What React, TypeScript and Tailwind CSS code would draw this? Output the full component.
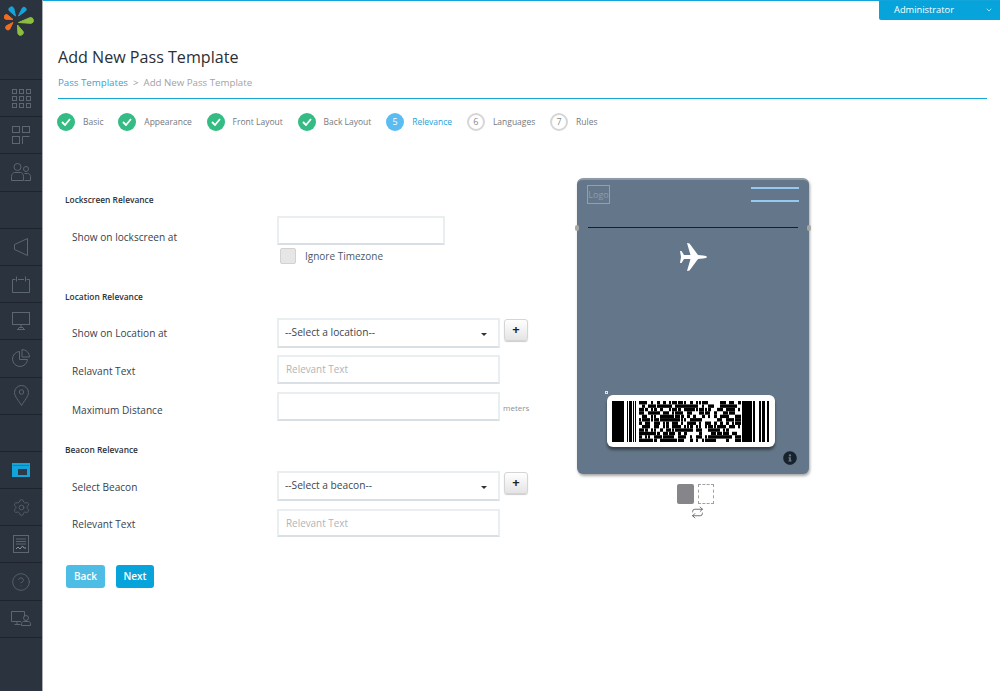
import { ChevronDown, CircleHelp, Repeat, Settings } from 'lucide-react'
import { FaInfoCircle } from 'react-icons/fa'
import type { ReactNode } from 'react'

const stroke = { fill: 'none', stroke: '#5c6772', strokeWidth: 1 }

function Svg({ w = 20, h = 20, children }: { w?: number; h?: number; children: ReactNode }) {
  return (
    <svg width={w} height={h} viewBox={`0 0 ${w} ${h}`} {...stroke}>
      {children}
    </svg>
  )
}

const navIcons: Record<string, ReactNode> = {
  grid: (
    <Svg w={19} h={19}>
      {[0, 7, 14].flatMap((y) =>
        [0, 7, 14].map((x) => <rect key={`${x}-${y}`} x={x + 0.5} y={y + 0.5} width={4} height={4} />),
      )}
    </Svg>
  ),
  dash: (
    <Svg w={18} h={18}>
      <rect x={0.5} y={0.5} width={7} height={6} />
      <rect x={10.5} y={0.5} width={7} height={6} />
      <rect x={0.5} y={10.5} width={7} height={7} />
      <path d="M10.5 18v-7.5h7" />
    </Svg>
  ),
  users: (
    <Svg w={20} h={18}>
      <circle cx={6.5} cy={4} r={3.5} />
      <circle cx={15} cy={6} r={2.5} />
      <path d="M.5 17.5v-4c0-2.5 2-4 3-4h6c1.5 0 3 1.5 3 4v4z" />
      <path d="M13.5 10.5h3c2 0 3 1.5 3 3v4h-6" />
    </Svg>
  ),
  speaker: (
    <Svg w={14} h={18}>
      <path d="M13.5.5v17L.5 11.5v-5z" />
    </Svg>
  ),
  calendar: (
    <Svg w={18} h={17}>
      <path d="M.5 3.5v13h17v-13h-3M3.5 3.5h-3M6 3.5h6" />
      <path d="M4.5.5v5M13.5.5v5" />
    </Svg>
  ),
  monitor: (
    <Svg w={18} h={18}>
      <rect x={0.5} y={0.5} width={17} height={12} />
      <path d="M9 13v2M5 17.5h8M7 15.5h4l1 2H6z" />
    </Svg>
  ),
  pie: (
    <Svg w={18} h={18}>
      <path d="M7.5 2.5a7.5 7.5 0 1 0 8 8h-8z" />
      <path d="M10 .5a7.5 7.5 0 0 1 7.5 7.5H10z" />
    </Svg>
  ),
  pin: (
    <Svg w={15} h={21}>
      <path d="M7.5 20.5C5 16 .5 11.5.5 7.5a7 7 0 0 1 14 0c0 4-4.5 8.5-7 13z" />
      <circle cx={7.5} cy={7} r={2.2} />
    </Svg>
  ),
  window: (
    <svg width={18} height={14} viewBox="0 0 18 14">
      <rect width={18} height={14} fill="#12a5dc" />
      <rect x={1} y={2} width={16} height={1} fill="#1a7da6" />
      <rect x={6} y={6} width={9} height={6} fill="#2c3a4a" />
    </svg>
  ),
  gear: <Settings size={19} strokeWidth={1} color="#5c6772" />,
  report: (
    <Svg w={16} h={18}>
      <rect x={0.5} y={0.5} width={15} height={17} />
      <path d="M3 4h10M3 6.5h10M3 9h10" />
      <path d="M3 14l2-2 2 2 2.5-3 1.5 2h2" stroke="#8a939c" />
    </Svg>
  ),
  help: <CircleHelp size={20} strokeWidth={1} color="#5c6772" />,
  support: (
    <Svg w={20} h={15}>
      <path d="M10 10.5H.5V.5h13v5" />
      <path d="M6 10.5V13M3.5 13.5h6" />
      <circle cx={15} cy={7} r={2.5} />
      <path d="M10.5 14.5v-2c0-1 1-2 2-2h5c1 0 2 1 2 2v2z" />
    </Svg>
  ),
}

const navRows = [
  'grid', 'dash', 'users', '', 'speaker', 'calendar', 'monitor', 'pie', 'pin', '', 'window', 'gear', 'report', 'help', 'support',
]

// petal = a teardrop, thin at the hub and round at the outer end
const petals: [number, number, number, number, number, string][] = [
  [15.5, 16, 11.5, 9.5, 2.6, '#12a5dc'],
  [18.5, 16, 24, 9.5, 2.2, '#12a5dc'],
  [13, 19.5, 6.5, 17, 2.4, '#f26b21'],
  [13, 22.5, 8, 27.5, 2.4, '#f26b21'],
  [18.5, 22.5, 30.5, 20.5, 2.9, '#8dbf3f'],
  [17.5, 25, 20.5, 32.5, 2.8, '#8dbf3f'],
]

function petalPath(ix: number, iy: number, ox: number, oy: number, r: number) {
  const len = Math.hypot(ox - ix, oy - iy)
  const nx = (-(oy - iy) / len) * r
  const ny = ((ox - ix) / len) * r
  return `M${ix} ${iy}L${ox + nx} ${oy + ny}A${r} ${r} 0 0 0 ${ox - nx} ${oy - ny}Z`
}

function Logo() {
  return (
    <svg width={30} height={30} viewBox="4 6 30 30">
      {petals.map(([ix, iy, ox, oy, r, color]) => (
        <path
          key={`${ix}-${iy}`}
          d={petalPath(ix, iy, ox, oy, r)}
          fill={color}
          stroke={color}
          strokeWidth={1}
          strokeLinejoin="round"
        />
      ))}
    </svg>
  )
}

function Sidebar() {
  return (
    <aside className="flex w-[43px] flex-none flex-col border-r border-[#a9aeb3] bg-[#2a333e]">
      <div className="h-[79px] pt-[6px] pl-[4px]">
        <Logo />
      </div>
      {navRows.map((name, i) => (
        <div
          key={i}
          className="flex h-[37.2px] flex-none items-center justify-center border-t border-[#1d242d]"
        >
          {name && navIcons[name]}
        </div>
      ))}
      <div className="border-t border-[#1d242d]" />
    </aside>
  )
}

const steps = [
  { label: 'Basic' },
  { label: 'Appearance' },
  { label: 'Front Layout' },
  { label: 'Back Layout' },
  { label: 'Relevance', n: 5 },
  { label: 'Languages', n: 6 },
  { label: 'Rules', n: 7 },
]

function Stepper() {
  return (
    <div className="mt-[13px] -ml-[1px] flex h-[19px] items-center gap-[14.8px]">
      {steps.map((s, i) => (
        <div key={s.label} className="flex items-center">
          {!s.n ? (
            <span className="flex size-[18px] items-center justify-center rounded-full bg-[#34bc84]">
              <svg width={10} height={8} viewBox="0 0 10 8" fill="none" stroke="#fff" strokeWidth={1.8}>
                <path d="M1 4l3 3 5-6" />
              </svg>
            </span>
          ) : i === 4 ? (
            <span className="flex size-[18px] items-center justify-center rounded-full bg-[#5bbcf2] text-[9px] text-white">
              5
            </span>
          ) : (
            <span className="flex size-[18px] items-center justify-center rounded-full border-2 border-[#d6d6d6] text-[9px] text-[#8b8b8b]">
              {s.n}
            </span>
          )}
          <span className={`mt-[1px] ml-[8px] text-[8.5px] ${i === 4 ? 'text-[#1ba3dc]' : 'text-[#75797d]'}`}>
            {s.label}
          </span>
        </div>
      ))}
    </div>
  )
}

function SectionTitle({ children, className }: { children: ReactNode; className: string }) {
  return <h3 className={`pl-[7px] text-[8.4px] leading-[12px] font-semibold text-[#2c333b] ${className}`}>{children}</h3>
}

function Row({
  label,
  offset,
  className,
  children,
}: {
  label: string
  offset: string
  className: string
  children: ReactNode
}) {
  return (
    <div className={`flex ${className}`}>
      <label className={`w-[219px] flex-none pl-[14px] text-[10.1px] leading-[14px] text-[#37424e] ${offset}`}>
        {label}
      </label>
      {children}
    </div>
  )
}

function TextField({ placeholder, wide = true, short = false }: { placeholder?: string; wide?: boolean; short?: boolean }) {
  return (
    <div
      className={`${short ? 'h-[28px]' : 'h-[29px]'} ${wide ? 'w-[223px]' : 'w-[168px]'} border-2 border-[#e9eef1] border-b-[#d9e0e5] bg-white pl-[7px] text-[9.9px] leading-[24px] text-[#b1b4b7]`}
    >
      {placeholder}
    </div>
  )
}

function SelectField({ label }: { label: string }) {
  return (
    <div className="flex items-start">
      <div className="flex h-[30px] w-[223px] items-center justify-between border-2 border-[#e9eef1] border-b-[#d9e0e5] pr-[11px] pl-[6px] text-[10.2px] text-[#3c4650]">
        {label}
        <span className="mt-[3px] border-x-[3.5px] border-t-[3.5px] border-x-transparent border-t-[#2f3338]" />
      </div>
      <button className="mt-[1px] ml-[4px] flex h-[22px] w-[24px] items-center justify-center rounded-[3px] border border-[#d5d5d5] bg-gradient-to-b from-white to-[#e4e4e4] pb-[2px] text-[13px] leading-none font-bold text-[#222] shadow-[0_1px_1px_rgba(0,0,0,0.2)]">
        +
      </button>
    </div>
  )
}

function Form() {
  return (
    <div className="w-[519px] flex-none">
      <SectionTitle className="mt-[63px]">Lockscreen Relevance</SectionTitle>
      <Row label="Show on lockscreen at" offset="pt-[14px]" className="mt-[10px]">
        <div>
          <TextField wide={false} />
          <div className="mt-[3px] flex h-[16px] items-center pl-[3px]">
            <span className="size-[16px] rounded-[2px] border border-[#d2d2d2] bg-[#e6e6e6]" />
            <span className="ml-[9px] text-[10px] text-[#4a5868]">Ignore Timezone</span>
          </div>
        </div>
      </Row>
      <SectionTitle className="mt-[27px]">Location Relevance</SectionTitle>
      <Row label="Show on Location at" offset="pt-[8px]" className="mt-[15px]">
        <SelectField label="--Select a location--" />
      </Row>
      <Row label="Relavant Text" offset="pt-[9px]" className="mt-[7px]">
        <TextField placeholder="Relevant Text" />
      </Row>
      <Row label="Maximum Distance" offset="pt-[11px]" className="mt-[8px]">
        <TextField />
        <span className="mt-[10px] ml-[3px] text-[8px] text-[#8d9195]">meters</span>
      </Row>
      <SectionTitle className="mt-[23px]">Beacon Relevance</SectionTitle>
      <Row label="Select Beacon" offset="pt-[9px]" className="mt-[15px]">
        <SelectField label="--Select a beacon--" />
      </Row>
      <Row label="Relevant Text" offset="pt-[8px]" className="mt-[8px]">
        <TextField placeholder="Relevant Text" short />
      </Row>
      <div className="mt-[28px] flex pl-[8px]">
        <button className="h-[23px] w-[39px] rounded-[3px] bg-[#4dbde6] text-[10px] font-semibold text-white">Back</button>
        <button className="ml-[11px] h-[23px] w-[38px] rounded-[3px] bg-[#06a4da] text-[10px] font-semibold text-white">Next</button>
      </div>
    </div>
  )
}

// the data block is noise, seeded so that every render draws the same thing
function barcodeCells() {
  const cells: { x: number; y: number; w: number }[] = []
  let seed = 4711
  const rand = () => {
    seed = (seed * 9301 + 49297) % 233280
    return seed / 233280
  }
  for (let row = 0; row < 12; row++) {
    for (let col = 0; col < 34; col++) {
      if (rand() < 0.68) cells.push({ x: col * 3, y: row, w: rand() < 0.3 ? 2 : 3 })
    }
  }
  return cells
}

function Barcode() {
  const startBars = [[1, 12], [16, 1], [18, 3], [22, 1], [24, 1]]
  const stopBars = [[131, 10], [142, 2], [148, 2], [151, 3], [156, 2]]
  return (
    <svg width={160} height={41} viewBox="0 0 160 41" className="block">
      {startBars.concat(stopBars).map(([x, w]) => (
        <rect key={x} x={x} y={0} width={w} height={41} fill="#000" />
      ))}
      {barcodeCells().map((c) => (
        <rect key={`${c.x}-${c.y}`} x={28 + c.x} y={c.y * 3.42} width={c.w} height={3.42} fill="#000" />
      ))}
    </svg>
  )
}

function PassPreview() {
  return (
    <div className="mt-[47px] w-[232px] flex-none">
      <div className="relative h-[296px] rounded-[6px] border-t-2 border-t-[#8e9aa6] bg-[#64778a] shadow-[1px_2px_3px_rgba(0,0,0,0.35)]">
        <span className="absolute top-[45px] -left-[2px] h-[6px] w-[4px] rounded-full bg-[#a8a8a0]" />
        <span className="absolute top-[45px] -right-[2px] h-[6px] w-[4px] rounded-full bg-[#a8a8a0]" />
        <div className="flex justify-between pt-[5px] pr-[10px] pl-[10px]">
          <div className="flex h-[19px] w-[23px] items-center justify-center border border-[#93a0ad] text-[9px] text-[#8f9ca9]">
            Logo
          </div>
          <div className="w-[48px] pt-[2px]">
            <div className="h-[1.5px] bg-[#95c8f2]" />
            <div className="mt-[11.5px] h-[1.5px] bg-[#95c8f2]" />
          </div>
        </div>
        <div className="mx-[11px] mt-[23px] h-[1px] bg-[#16202b]" />
        <div className="mt-[15px] flex justify-center">
          <svg width={28} height={28} viewBox="0 0 28 28" fill="#fff">
            <path d="M28 14c0-.8-2-1.4-4-1.5L19 12 10.5.5 8 0l3.5 12H5L2.5 8H1l1 6-1 6h1.5L5 16h6.5L8 28l2.5-.5L19 16l5-.5c2-.1 4-.7 4-1.5z" />
          </svg>
        </div>
        <span className="absolute top-[211px] left-[28px] size-[3px] border border-white/80" />
        <div className="absolute top-[215px] left-[30px] flex h-[52px] w-[168px] items-center justify-center rounded-[6px] bg-white shadow-[0_3px_3px_rgba(0,0,0,0.45)]">
          <Barcode />
        </div>
        <FaInfoCircle className="absolute top-[271px] left-[206px] text-[14px] text-[#18222c]" />
      </div>
      <div className="mt-[10px] flex justify-center pl-[4px]">
        <span className="h-[20px] w-[17px] rounded-[2px] bg-[#85858a]" />
        <span className="ml-[4px] h-[20px] w-[16px] border border-dashed border-[#a0a0a0]" />
      </div>
      <div className="mt-[2px] flex justify-center pl-[8px]">
        <Repeat size={13} strokeWidth={1.5} color="#4c545c" />
      </div>
    </div>
  )
}

export default function App() {
  return (
    <div className="flex h-[691px] w-[1000px] overflow-hidden bg-white font-['Open_Sans',sans-serif]">
      <Sidebar />
      <main className="flex min-w-0 flex-1 flex-col border-t border-[#12a5dc]">
        <div className="flex justify-end">
          <div className="flex h-[19px] w-[121px] items-center justify-between rounded-bl-[2px] bg-[#06a4da] pr-[7px] pb-[2px] pl-[15px] text-[9.3px] text-white">
            Administrator
            <ChevronDown size={8} />
          </div>
        </div>
        <div className="pr-[13px] pl-[15px]">
          <h1 className="mt-[25px] text-[16.1px] leading-[24px] text-[#2a2f36]">Add New Pass Template</h1>
          <div className="mt-[6px] flex h-[16px] items-center text-[9.7px]">
            <span className="text-[#3a9fd8]">Pass Templates</span>
            <span className="mx-[5px] text-[#9a9a9a]">&gt;</span>
            <span className="text-[#a2a2a2]">Add New Pass Template</span>
          </div>
          <div className="mt-[7px] border-t border-[#12a9d9]" />
          <Stepper />
        </div>
        <div className="ml-[15px] flex">
          <Form />
          <PassPreview />
        </div>
      </main>
    </div>
  )
}
